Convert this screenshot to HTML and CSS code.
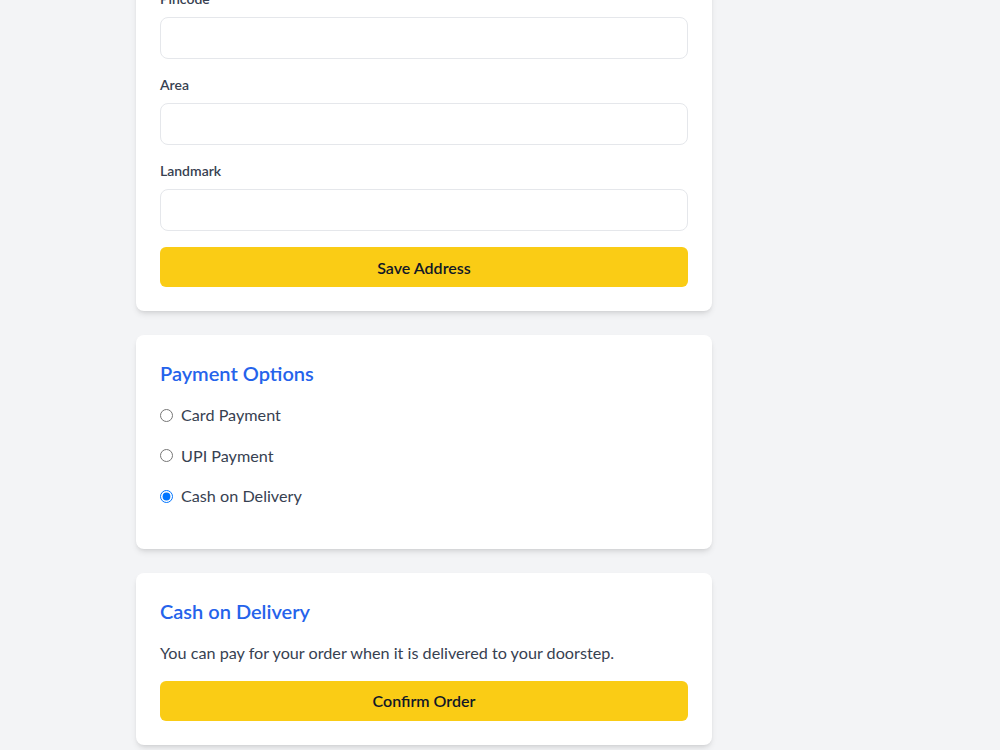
FILE: index.html
```html
<!DOCTYPE html>
<html lang="en">
<head>
    <meta charset="UTF-8">
    <meta name="viewport" content="width=device-width, initial-scale=1.0">
    <title>Checkout</title>
    <link rel="stylesheet" href="styles.css">
</head>
<body>
    <main class="checkout">
        <section class="card">
            <div class="field">
                <label for="pincode">Pincode</label>
                <input type="text" id="pincode">
            </div>
            <div class="field">
                <label for="area">Area</label>
                <input type="text" id="area">
            </div>
            <div class="field">
                <label for="landmark">Landmark</label>
                <input type="text" id="landmark">
            </div>
            <button class="btn">Save Address</button>
        </section>

        <section class="card">
            <h2>Payment Options</h2>
            <label class="option"><input type="radio" name="pay"> Card Payment</label>
            <label class="option"><input type="radio" name="pay"> UPI Payment</label>
            <label class="option"><input type="radio" name="pay" checked> Cash on Delivery</label>
        </section>

        <section class="card">
            <h2>Cash on Delivery</h2>
            <p>You can pay for your order when it is delivered to your doorstep.</p>
            <button class="btn">Confirm Order</button>
        </section>
    </main>
</body>
</html>
```

FILE: styles.css
```css
* {
    box-sizing: border-box;
    margin: 0;
}
body {
    background-color: #f3f4f6;
    font-family: Lato, "Noto Sans", sans-serif;
    color: #374151;
    overflow: hidden;
}
.checkout {
    width: 576px;
    margin-left: 136px;
    margin-top: -35px;
}
.card {
    background: #fff;
    border-radius: 8px;
    padding: 24px;
    margin-bottom: 24px;
    box-shadow: 0 4px 6px -1px rgba(0, 0, 0, 0.1), 0 2px 4px -2px rgba(0, 0, 0, 0.1);
}
.field {
    margin-bottom: 16px;
}
.field label {
    display: block;
    font-size: 14px;
    line-height: 20px;
    font-weight: 600;
    margin-bottom: 8px;
}
.field input {
    display: block;
    width: 100%;
    height: 42px;
    border: 1px solid #e5e7eb;
    border-radius: 8px;
    padding: 8px 12px;
    font: inherit;
}
.btn {
    display: block;
    width: 100%;
    height: 40px;
    border: none;
    border-radius: 6px;
    background: #facc15;
    color: #111827;
    font-family: inherit;
    font-size: 16px;
    font-weight: 600;
}
h2 {
    color: #2563eb;
    font-size: 20px;
    line-height: 28px;
    font-weight: 600;
    margin-bottom: 16px;
}
.option {
    display: flex;
    align-items: center;
    font-size: 16.2px;
    line-height: 24.5px;
    margin-bottom: 16px;
}
.option input {
    width: 13px;
    height: 13px;
    margin: 0 8px 0 0;
}
p {
    font-size: 16.2px;
    line-height: 24px;
    margin-bottom: 16px;
}
```
